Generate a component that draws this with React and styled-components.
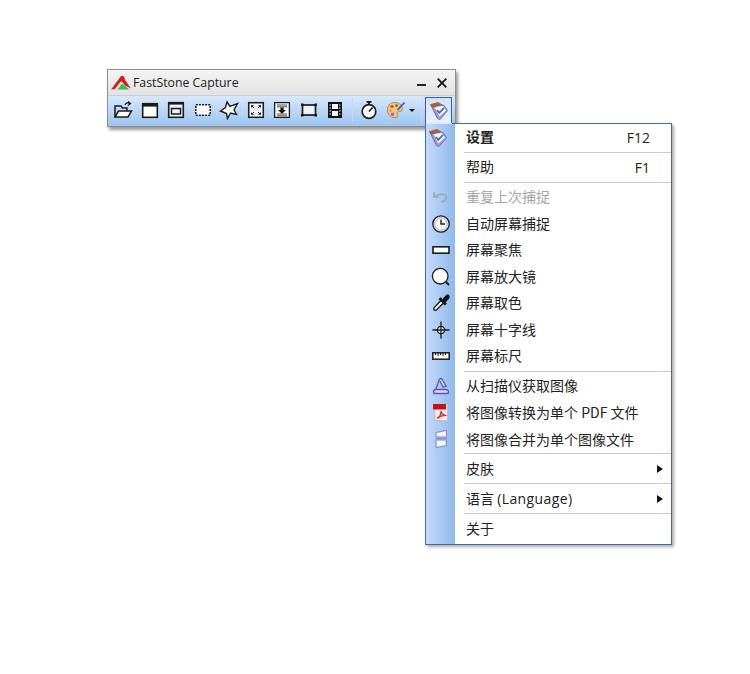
import React from "react";
import styled, { createGlobalStyle } from "styled-components";

const Global = createGlobalStyle`
  html, body { margin: 0; padding: 0; background: #fff; }
  body { font-family: "Noto Sans CJK SC", "Noto Sans", sans-serif; }
`;

const Page = styled.div`
  width: 750px;
  height: 674px;
  padding: 69px 0 0 107px;
  box-sizing: border-box;
  overflow: hidden;
`;

const Anchor = styled.div`
  position: relative;
  width: 349px;
`;

const Window = styled.div`
  box-sizing: border-box;
  width: 349px;
  height: 58px;
  border: 1px solid #8e8e8e;
  box-shadow: 2px 3px 3px rgba(70, 70, 70, 0.55);
  display: flex;
  flex-direction: column;
`;

const TitleBar = styled.div`
  height: 26px;
  display: flex;
  align-items: center;
  padding: 0 8px 0 2px;
  background: linear-gradient(#f4f4f4, #e2e2e2);
  border-bottom: 1px solid #c9cfd6;
  box-sizing: border-box;
`;

const AppTitle = styled.span`
  font: 12.3px "Open Sans", "Noto Sans", sans-serif;
  color: #222;
  margin-left: 1px;
  flex: 1;
`;

const WinButtons = styled.div`
  display: flex;
  align-items: center;
  gap: 11px;
`;

const Toolbar = styled.div`
  flex: 1;
  display: flex;
  align-items: flex-start;
  padding: 1px 0 0 2px;
  background: linear-gradient(#d8e8fa, #9dc4f0);
`;

const ToolSlot = styled.div`
  width: ${(p) => p.$w || 26.5}px;
  height: 26px;
  margin-left: ${(p) => p.$ml || 0}px;
  display: flex;
  align-items: center;
  justify-content: center;
  flex: none;
`;

const ToolSep = styled.div`
  width: 1px;
  height: 24px;
  margin: 1px ${(p) => p.$mr}px 0 ${(p) => p.$ml}px;
  background: #c2d9f3;
  flex: none;
`;

const Pressed = styled.div`
  box-sizing: border-box;
  width: 27px;
  height: 27px;
  border: 1px solid #3d5f93;
  border-bottom: 0;
  background: linear-gradient(#cfe2f8, #eaf2fc);
  display: flex;
  align-items: center;
  justify-content: center;
  flex: none;
`;

const Menu = styled.div`
  position: absolute;
  left: 318px;
  top: 54px;
  box-sizing: border-box;
  width: 247px;
  height: 422px;
  border: 1px solid #47699c;
  background: #fff;
  box-shadow: 2px 2px 3px rgba(90, 90, 90, 0.5);
  display: flex;
`;

const MenuJoin = styled.div`
  position: absolute;
  left: 0;
  top: -1px;
  width: 26px;
  height: 1px;
  background: #dce9f9;
`;

const Strip = styled.div`
  width: 29px;
  flex: none;
  background: linear-gradient(90deg, #c4dbf7, #8fb9ee);
  display: flex;
  flex-direction: column;
`;

const Body = styled.div`
  flex: 1;
  min-width: 0;
  padding-left: 9px;
  display: flex;
  flex-direction: column;
`;

const IconCell = styled.div`
  height: ${(p) => p.$h}px;
  display: flex;
  align-items: center;
  justify-content: center;
  margin-top: ${(p) => p.$mt || 0}px;
  padding-right: ${(p) => p.$pr || 0}px;
  flex: none;
`;

const Row = styled.div`
  height: ${(p) => p.$h}px;
  margin-top: ${(p) => p.$mt || 0}px;
  display: flex;
  align-items: center;
  justify-content: space-between;
  padding: 0 ${(p) => p.$pr || 21}px 0 2px;
  font-size: 14px;
  font-weight: ${(p) => (p.$bold ? 700 : 400)};
  color: ${(p) => (p.$disabled ? "#a6a6a6" : "#222")};
  white-space: nowrap;
  flex: none;
`;

const Label = styled.span`
  margin-bottom: ${(p) => p.$lift}px;
`;

const Sep = styled.div`
  height: 1px;
  background: #c9c9c9;
  flex: none;
  margin-top: ${(p) => p.$mt || 0}px;
`;

const Key = styled.span`
  font: 14px "Open Sans", "Noto Sans", sans-serif;
  color: #222;
  margin-bottom: 1px;
`;

const Latin = styled.span`
  font-family: "Open Sans", "Noto Sans", "Noto Sans CJK SC", sans-serif;
  letter-spacing: 0.4px;
`;

const Arrow = styled.span`
  width: 0;
  height: 0;
  border-left: 6px solid #111;
  border-top: 4px solid transparent;
  border-bottom: 4px solid transparent;
`;

const S = ({ size = 20, children, fill = "none", stroke = "#1b1b1b", sw = 1.4 }) => (
  <svg width={size} height={size} viewBox="0 0 20 20" fill={fill} stroke={stroke} strokeWidth={sw}>
    {children}
  </svg>
);

const Logo = () => (
  <svg width="22" height="18" viewBox="0 0 22 18">
    <path d="M1 15.5 L11 2 L13.5 2 L15 5 L10 8.5 L5 15 Z" fill="#d4231c" />
    <path d="M13 3 L21 14.5 L15 11.5 L11.5 7 Z" fill="#c9201c" />
    <path d="M7.5 15.5 L12 9.5 L19.5 15.5 Z" fill="#3dbb52" />
  </svg>
);

const Open = () => (
  <S sw={1.5}>
    <path d="M2 17 V6 H8 L9.5 8 H14 V11" />
    <path d="M2 17 L5.5 11 H18.5 L15 17 Z" fill="#fff" />
    <path d="M12 5 C13 2.5 15 2.5 16.5 3.5 M15 1.5 L17.5 3.5 L15 5.5" strokeWidth="1.2" />
  </S>
);
const WinIco = () => (
  <S>
    <rect x="2.7" y="3.7" width="14.6" height="13.6" fill="#fff" strokeWidth="1.6" />
    <rect x="2" y="3" width="16" height="3.6" fill="#1b1b1b" stroke="none" />
  </S>
);
const ObjIco = () => (
  <S>
    <rect x="2.7" y="2.7" width="14.6" height="14.6" fill="#eef4fb" strokeWidth="1.6" />
    <rect x="2" y="2" width="16" height="2.6" fill="#1b1b1b" stroke="none" />
    <rect x="5.5" y="8.5" width="9" height="5.5" strokeWidth="1.5" fill="none" />
  </S>
);
const RectIco = () => (
  <S sw={1.6}>
    <rect x="2.8" y="4.8" width="14.4" height="10.4" fill="#fff" strokeDasharray="2 1.1" />
  </S>
);
const FreeIco = () => (
  <S sw={1.4}>
    <path d="M8 2 L11 6.5 L18.5 3.5 L15 10 L17.5 14.5 L11.5 13 L8.5 18.5 L7.5 13.5 L1.5 11 L6.5 7.5 Z" fill="#fff" />
  </S>
);
const FullIco = () => (
  <S sw={1}>
    <rect x="2.7" y="2.7" width="14.6" height="14.6" fill="#eef3fa" strokeWidth="1.5" />
    <path d="M5.5 5.5 L8 8 M5.5 7.5 V5.5 H7.5 M14.5 5.5 L12 8 M12.5 5.5 H14.5 V7.5 M5.5 14.5 L8 12 M5.5 12.5 V14.5 H7.5 M14.5 14.5 L12 12 M12.5 14.5 H14.5 V12.5" stroke="#333" />
  </S>
);
const ScrollIco = () => (
  <S sw={1}>
    <rect x="2.6" y="2.6" width="14.8" height="14.8" fill="#f4f7fb" strokeWidth="1.3" />
    <path d="M5 5 H15 M5 6.8 H15 M5 14 H15 M5 15.8 H15" stroke="#555" />
    <path d="M8.4 7.5 H11.6 V10 H14 L10 13.8 L6 10 H8.4 Z" fill="#111" stroke="none" />
  </S>
);
const FixedIco = () => (
  <S sw={1.7}>
    <rect x="3.5" y="5" width="13" height="10" fill="#eef3fa" />
    <path d="M2 3.5 H4.5 V6 H2 Z M15.5 3.5 H18 V6 H15.5 Z M2 14 H4.5 V16.5 H2 Z M15.5 14 H18 V16.5 H15.5 Z" fill="#111" stroke="none" />
  </S>
);
const FilmIco = () => (
  <S sw={1.4}>
    <rect x="3.7" y="2.7" width="12.6" height="14.6" fill="#111" stroke="#111" />
    <rect x="7" y="4" width="6" height="5" fill="#f3f6fb" stroke="none" />
    <rect x="7" y="11" width="6" height="5" fill="#f3f6fb" stroke="none" />
    <path d="M4.5 5 H6 M4.5 8 H6 M4.5 11 H6 M4.5 14 H6 M14 5 H15.5 M14 8 H15.5 M14 11 H15.5 M14 14 H15.5" stroke="#f3f6fb" strokeWidth="1.2" />
  </S>
);
const TimerIco = () => (
  <S sw={1.7}>
    <circle cx="10" cy="11.5" r="6.8" fill="#fff" />
    <path d="M7.5 1.8 H12.5 M10 2 V4.5" strokeWidth="1.8" />
    <path d="M10 11.5 L13.5 7.5" strokeWidth="1.7" />
  </S>
);
const Palette = () => (
  <svg width="20" height="20" viewBox="0 0 20 20">
    <path d="M9 2.5 C3.5 2.5 1 6.5 1.5 11 C2 15.5 6 18 10 17.5 C12.5 17 12 15 11 14 C10.5 13 11.5 11.5 13.5 11.5 C16 11.5 17 10 16 7 C15 4 12 2.5 9 2.5 Z" fill="#f0c48a" stroke="#9a7a48" strokeWidth="0.8" />
    <circle cx="6" cy="6.5" r="1.6" fill="#e0402a" />
    <circle cx="10.5" cy="5.5" r="1.5" fill="#2f9e44" />
    <circle cx="4.5" cy="10.5" r="1.6" fill="#e3b21c" />
    <circle cx="6.5" cy="14.2" r="1.6" fill="#c24ac8" />
    <path d="M18.5 2.5 L11.5 10" stroke="#4a4fb0" strokeWidth="1.8" />
  </svg>
);
const Settings = () => (
  <svg width="20" height="20" viewBox="0 0 20 20">
    <path d="M2 4.5 L8.5 17.5 C9.5 18.8 11 18.5 12 17.5 L18.5 9.5 L14.5 4 Z" fill="#a594dc" stroke="#7a68bc" strokeWidth="1" />
    <path d="M5.5 6 L14 5 L17 9.5 L10.5 15.5 Z" fill="#f8f8fc" />
    <path d="M1.5 3.5 L9 1.5 L12.5 3.5 L4.5 6 L3 6 Z" fill="#b9602f" stroke="#8f4620" strokeWidth=".6" />
    <path d="M8 9 L10.3 11.8 L15 6.8" fill="none" stroke="#2d78b8" strokeWidth="1.8" />
  </svg>
);
const Undo = () => (
  <S stroke="#98a4b4" sw={1.6}>
    <path d="M3 5.5 V10 H7.5" />
    <path d="M3.5 10 C7 6.5 12 6.5 14.5 8.5 C16.5 10.5 15.5 14 10.5 14.8" />
  </S>
);
const Clock = () => (
  <S sw={1.3}>
    <circle cx="10" cy="10" r="8.2" fill="#eef3fb" />
    <circle cx="10" cy="10" r="6.2" fill="#fff" stroke="#888" strokeWidth=".7" />
    <path d="M10 5.5 V10 H14" strokeWidth="1.4" />
  </S>
);
const Focus = () => (
  <S sw={1.6}>
    <rect x="2" y="6.8" width="16" height="6.4" fill="#fff" />
  </S>
);
const Magnifier = () => (
  <S sw={1.3}>
    <circle cx="9.2" cy="9.2" r="7.8" fill="#fff" />
    <path d="M15 15 L18 18" strokeWidth="2" />
  </S>
);
const Dropper = () => (
  <S sw={1.3}>
    <path d="M3 17 L2.8 15 L10 7.5 L12.5 10 L5 17.2 Z" fill="#fff" />
    <path d="M9.5 5 L15 10.5 L13.8 11.5 L8.5 6.2 Z" fill="#111" />
    <path d="M11.5 7 L15 3 C16 2 17.5 2 18 3 C18.5 4 18 5 17 6 L13.5 9.5 Z" fill="#111" />
  </S>
);
const Cross = () => (
  <S sw={1.3}>
    <circle cx="10" cy="10" r="3.6" fill="#fff" strokeWidth="1.4" />
    <path d="M10 1.5 V18.5 M1.5 10 H18.5" />
  </S>
);
const Ruler = () => (
  <S sw={1.5}>
    <rect x="1.8" y="6.8" width="16.4" height="6.4" fill="#fff" />
    <path d="M4.5 7 V9 M7 7 V10 M9.5 7 V9 M12 7 V10 M14.5 7 V9" strokeWidth="1" />
  </S>
);
const Scanner = () => (
  <svg width="20" height="20" viewBox="0 0 20 20">
    <path d="M3 17.5 C2 15 3 13.5 5 13.5 H15 C17 13.5 18 15.5 17 17.5 Z" fill="#dcd8f6" stroke="#5b55b8" strokeWidth="1.5" />
    <path d="M5 13 L8.5 3 L10.5 2.5 L15 10 L12 11 L9 5" fill="#e9e6fb" stroke="#5b55b8" strokeWidth="1.4" />
  </svg>
);
const Pdf = () => (
  <svg width="20" height="20" viewBox="0 0 20 20">
    <path d="M4 2.5 H16.5 V18.5 H4 Z" fill="#f8ecec" stroke="#c8b8b8" strokeWidth=".8" />
    <rect x="2" y="2" width="13" height="5.5" fill="#c3121c" />
    <path d="M6 16.5 C8.5 15 10 11.5 10 9 C10 11 12 13.5 15.5 13.5 C12 13 8.5 14.5 6 16.5 Z" fill="none" stroke="#d2232a" strokeWidth="1.2" />
  </svg>
);
const Merge = () => (
  <svg width="20" height="20" viewBox="0 0 20 20">
    <path d="M5 3.5 L15.5 1.5 V8 H5 Z" fill="#f4f4fc" stroke="#8c8cd0" strokeWidth="1.1" />
    <path d="M5 11 H15.5 V16.5 L5 18.5 Z" fill="#f4f4fc" stroke="#8c8cd0" strokeWidth="1.1" />
    <rect x="5" y="8.7" width="10.5" height="1.6" fill="#8c8cd0" />
  </svg>
);

const tools = [Open, WinIco, ObjIco, RectIco, FreeIco, FullIco, ScrollIco, FixedIco, FilmIco];

const sections = [
  { items: [{ h: 28, t: "设置", k: "F12", bold: true, icon: Settings, lift: 4, ipr: 6 }] },
  { items: [{ h: 29, t: "帮助", k: "F1", lift: 4 }] },
  {
    pad: 1,
    items: [
      { t: "重复上次捕捉", disabled: true, icon: Undo },
      { t: "自动屏幕捕捉", icon: Clock },
      { t: "屏幕聚焦", icon: Focus },
      { t: "屏幕放大镜", icon: Magnifier },
      { t: "屏幕取色", icon: Dropper },
      { t: "屏幕十字线", icon: Cross },
      { t: "屏幕标尺", icon: Ruler },
    ],
  },
  {
    pad: 1,
    items: [
      { t: "从扫描仪获取图像", icon: Scanner },
      { t: "将图像转换为单个 PDF 文件", icon: Pdf, lift: 0 },
      { t: "将图像合并为单个图像文件", icon: Merge, lift: 0 },
    ],
  },
  { items: [{ h: 29, t: "皮肤", sub: true }] },
  { items: [{ h: 29, t: "语言 ", latin: "(Language)", sub: true }] },
  { items: [{ h: 28, t: "关于", lift: 0 }] },
];

export default function App() {
  return (
    <Page>
      <Global />
      <Anchor>
        <Window>
          <TitleBar>
            <Logo />
            <AppTitle>FastStone Capture</AppTitle>
            <WinButtons>
              <svg width="9" height="9" viewBox="0 0 9 9"><rect x="0" y="6" width="9" height="2" fill="#222" /></svg>
              <svg width="10" height="10" viewBox="0 0 10 10"><path d="M.7 .7 L9.3 9.3 M9.3 .7 L.7 9.3" stroke="#111" strokeWidth="1.7" /></svg>
            </WinButtons>
          </TitleBar>
          <Toolbar>
            {tools.map((T, i) => (
              <ToolSlot key={i}><T /></ToolSlot>
            ))}
            <ToolSep $ml={3} $mr={4} />
            <ToolSlot $w={24}><TimerIco /></ToolSlot>
            <ToolSlot $w={26} $ml={2}><Palette /></ToolSlot>
            <svg width="7" height="26" viewBox="0 0 7 26"><path d="M0 12 H6 L3 15 Z" fill="#111" /></svg>
            <ToolSep $ml={5.5} $mr={3} />
            <Pressed><Settings /></Pressed>
          </Toolbar>
        </Window>
        <Menu>
          <MenuJoin />
          <Strip>
            {sections.map((s, si) => (
              <React.Fragment key={si}>
                {s.items.map((it, i) => (
                  <IconCell key={i} $h={it.h || 26.5} $mt={i === 0 ? s.pad || 0 : 0} $pr={it.ipr}>
                    {it.icon ? <it.icon /> : null}
                  </IconCell>
                ))}
                {si < sections.length - 1 ? <IconCell $h={1 + (s.pad || 0)} /> : null}
              </React.Fragment>
            ))}
          </Strip>
          <Body>
            {sections.map((s, si) => (
              <React.Fragment key={si}>
                {s.items.map((it, i) => (
                  <Row key={i} $h={it.h || 26.5} $mt={i === 0 ? s.pad || 0 : 0} $bold={it.bold} $disabled={it.disabled} $pr={it.sub ? 8 : 21}>
                    <Label $lift={it.lift ?? 2}>{it.t}{it.latin ? <Latin>{it.latin}</Latin> : null}</Label>
                    {it.k ? <Key>{it.k}</Key> : null}
                    {it.sub ? <Arrow /> : null}
                  </Row>
                ))}
                {si < sections.length - 1 ? <Sep $mt={s.pad} /> : null}
              </React.Fragment>
            ))}
          </Body>
        </Menu>
      </Anchor>
    </Page>
  );
}
